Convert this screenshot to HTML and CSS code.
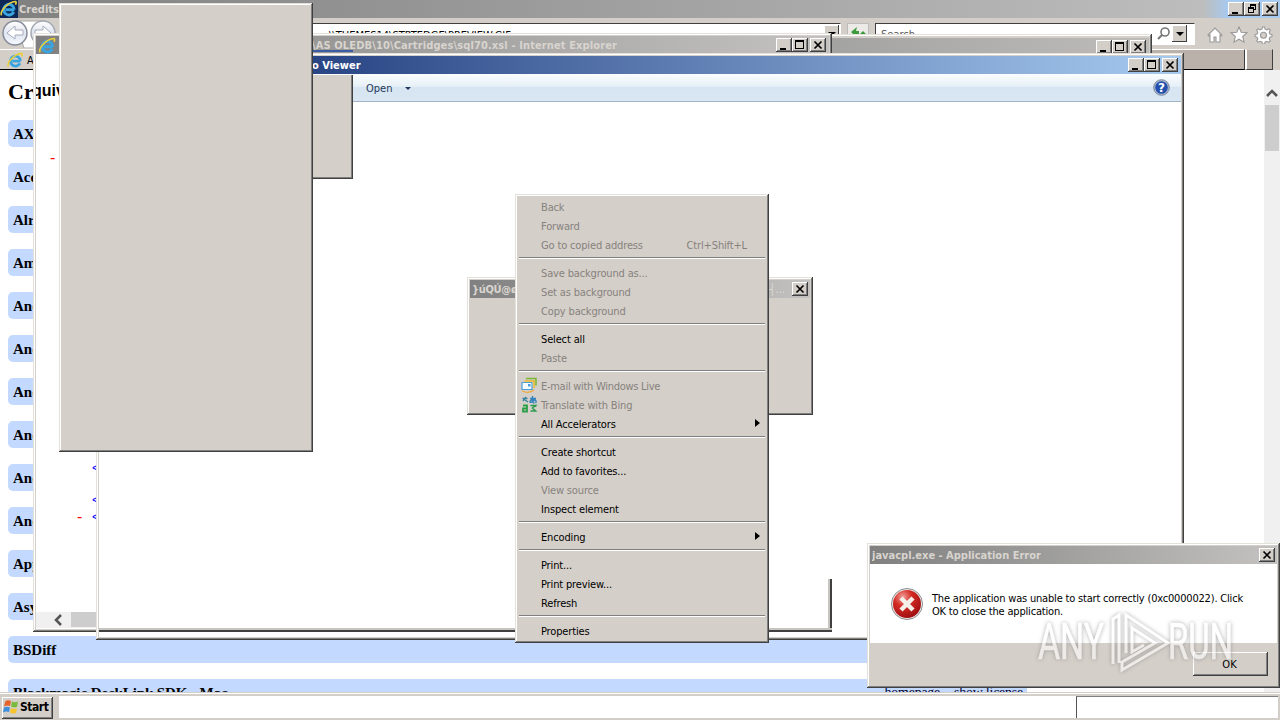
FILE: index.html
```html
<!DOCTYPE html>
<html lang="en">
<head>
<meta charset="utf-8">
<title>Desktop</title>
<link rel="stylesheet" href="styles.css">
</head>
<body>
<svg width="0" height="0" class="defs">
  <defs>
    <radialGradient id="ball" cx=".35" cy=".25" r=".8"><stop offset="0" stop-color="#f0a09a"/><stop offset=".4" stop-color="#d52b25"/><stop offset="1" stop-color="#9c0d10"/></radialGradient>
    <linearGradient id="nav" x1="0" y1="0" x2="0" y2="1"><stop offset="0" stop-color="#fff"/><stop offset=".5" stop-color="#dfe4ef"/><stop offset="1" stop-color="#f5faff"/></linearGradient>
    <symbol id="ie" viewBox="0 0 16 16"><path d="M13.6 9.2H5.2M12.9 11.3A5 5 0 1 1 13.4 8.9" fill="none" stroke="#39a5e0" stroke-width="2.8"/><path d="M1.500 14.500C-.5 11 7 2 14.600 1.400c1 .5.6 2-.1 3" fill="none" stroke="#e8ce3c" stroke-width="1.600"/></symbol>
    <symbol id="min" viewBox="0 0 16 14"><path d="M4 10h6v2H4z"/></symbol>
    <symbol id="max" viewBox="0 0 16 14"><path d="M3 2h9v9H3zM4 4v6h7V4z" fill-rule="evenodd"/></symbol>
    <symbol id="res" viewBox="0 0 16 14"><path d="M6 2h6v6h-2V7h1V4H7v1H6zM4 5h6v6H4zM5 7v3h4V7z" fill-rule="evenodd"/></symbol>
    <symbol id="cls" viewBox="0 0 16 14"><path d="M4.500 3.500l7 7M11.500 3.500l-7 7" stroke="#000" stroke-width="1.700"/></symbol>
  </defs>
</svg>
<main class="desktop">
  <section class="browser">
    <header class="titlebar main-title">
      <span class="ie-box"><svg width="17" height="17"><use href="#ie"/></svg></span>
      <span class="caption">Credits</span>
      <span class="buttons"><svg class="btn"><use href="#min"/></svg><svg class="btn"><use href="#res"/></svg><svg class="btn close"><use href="#cls"/></svg></span>
    </header>
    <div class="toolbar">
      <svg class="nav" width="60" height="30"><path d="M15 3h28q12 1 12 13v14H24z" fill="#fff" stroke="#aaa"/><circle cx="15" cy="15" r="12" fill="url(#nav)" stroke="#858b98" stroke-width="1.500"/><circle cx="43" cy="15" r="12" fill="url(#nav)" stroke="#a4a8b2" stroke-width="1.500"/><path d="M7 15l8-7v4h8v5h-8v4z" fill="#fff" stroke="#a5acbd"/><path d="M51 15l-8-7v4h-8v5h8v4z" fill="#fff" stroke="#a5acbd"/></svg>
      <div class="address"><span>\\THEMES14\STRTEDGE\PREVIEW.GIF</span><b class="drop"><i></i></b></div>
      <div class="refresh"><svg width="20" height="20"><path d="M9 3L3 8l5 5v-3h3V7H8zM11 11l4-4 4 4h-2v5h-4v-5z" fill="#3d9b3d"/></svg></div>
      <div class="search"><span>Search</span><svg width="16" height="16"><circle cx="9" cy="6" r="4" fill="#fff" stroke="#777" stroke-width="1.600"/><path d="M6.500 8.500L2 13" stroke="#777" stroke-width="2"/></svg><b class="drop"><i></i></b></div>
      <svg class="tools" width="70" height="18" fill="#fff" stroke="#999" stroke-width="1.100"><path d="M1 9l7-7 7 7-1 1-1-1v7h-4v-5H7v5H3V9l-1 1z"/><path d="M32 1l2.200 5.200 5.800.5-4.300 3.800 1.300 5.700-5-3-5 3 1.300-5.700L24 6.700l5.800-.5z"/><path d="M55.500 1h2l.6 2.200 1.800.7 2-1.100 1.400 1.400-1.100 2 .7 1.800 2.100.6v2l-2.100.6-.7 1.800 1.100 2-1.400 1.400-2-1.100-1.800.7-.6 2h-2l-.6-2-1.800-.7-2 1.100-1.400-1.400 1.100-2-.7-1.800-2.100-.6v-2l2.100-.6.7-1.800-1.100-2 1.400-1.400 2 1.100 1.800-.7z"/><circle cx="56.500" cy="9.200" r="3" fill="#d4cec8"/></svg>
    </div>
    <div class="tabs"><div class="tab"><svg width="16" height="16"><use href="#ie"/></svg><span>A</span></div><div class="newtab"></div></div>
    <div class="view">
      <div class="page">
        <h1>Credits</h1>
        <div class="product">AXE-CORE</div><div class="product">Accessibility</div><div class="product">Alrt</div><div class="product">Amd</div><div class="product">And</div><div class="product">And</div><div class="product">And</div><div class="product">And</div><div class="product">And</div><div class="product">And</div><div class="product">App</div><div class="product">Asy</div><div class="product">BSDiff</div>
        <div class="product"><span class="long">Blackmagic DeckLink SDK - Mac</span><span class="links"><u>homepage</u><u>show license</u></span></div>
      </div>
      <div class="scroll"><svg width="16" height="18"><path d="M3 12l5-5 5 5" fill="none" stroke="#555" stroke-width="2.500"/></svg><i></i></div>
    </div>
  </section>

  <section class="window back-window"><header class="titlebar gray"><span class="buttons"><svg class="btn"><use href="#min"/></svg><svg class="btn"><use href="#max"/></svg><svg class="btn close"><use href="#cls"/></svg></span></header></section>

  <section class="window xsl-window">
    <header class="titlebar gray"><svg class="ie-small" width="20" height="17"><use href="#ie"/></svg><span class="caption xsl-cap">\AS OLEDB\10\Cartridges\sql70.xsl - Internet Explorer</span><span class="buttons"><svg class="btn"><use href="#min"/></svg><svg class="btn"><use href="#max"/></svg><svg class="btn close"><use href="#cls"/></svg></span></header>
    <div class="xsl">
      <div class="heading">quiv</div>
      <div class="line l1"><em>-</em></div>
      <div class="line l2"><em></em><b>&lt;</b></div>
      <div class="line l3"><em></em><b>&lt;</b></div>
      <div class="line l4"><em>-</em><b>&lt;</b></div>
      <div class="hscroll"><svg width="35" height="16"><path d="M25 3l-5 5 5 5" fill="none" stroke="#555" stroke-width="2.500"/></svg><i></i></div>
    </div>
  </section>

  <section class="window viewer">
    <header class="titlebar blue"><span class="caption">o Viewer</span><span class="buttons"><svg class="btn"><use href="#min"/></svg><svg class="btn"><use href="#max"/></svg><svg class="btn close"><use href="#cls"/></svg></span></header>
    <div class="viewbar"><span>Open</span><i></i><svg width="17" height="17"><circle cx="8.500" cy="8.500" r="7.800" fill="#aeb9cf" stroke="#66738d" stroke-width=".8"/><circle cx="8.500" cy="8.500" r="6.300" fill="#2450ad"/><text x="8.500" y="13" text-anchor="middle" class="q">?</text></svg></div>
    <div class="canvas"><div class="remnant-side"></div><div class="remnant-bottom"></div></div>
  </section>
  <div class="blue-strip"></div>
  <div class="panel panel-a"></div>
  <div class="panel panel-b"></div>

  <section class="window dialog"><header class="titlebar gray"><span class="caption">}úQÚ@ø</span><span class="tail">┤...</span><span class="buttons"><svg class="btn close"><use href="#cls"/></svg></span></header></section>

  <nav class="menu">
    <div class="item off">Back</div><div class="item off">Forward</div><div class="item off">Go to copied address<span class="key">Ctrl+Shift+L</span></div>
    <hr>
    <div class="item off">Save background as...</div><div class="item off">Set as background</div><div class="item off">Copy background</div>
    <hr>
    <div class="item">Select all</div><div class="item off">Paste</div>
    <hr>
    <div class="item off tight"><svg class="ico" width="17" height="17"><path d="M5 1.500h10v7" fill="none" stroke="#7bb52e" stroke-width="1.500"/><path d="M3.500 4h9.500v7" fill="#fff4c4" stroke="#e8b52c" stroke-width="1.500"/><path d="M1 5.500h10v7H1z" fill="#f4fbff" stroke="#4f9cd8" stroke-width="1.200"/><path d="M7 7h2.500v2.500H7z" fill="#4a9bdb"/><path d="M1 14q7 3 12-1" fill="none" stroke="#f0a93a" stroke-width="1.300"/></svg>E-mail with Windows Live</div>
    <div class="item off"><svg class="ico" width="17" height="17" fill="none" stroke-width="1.400"><path d="M1.500 2.500h5M5 1L2 5M4 4l3 2" stroke="#38829f"/><path d="M9 2.500h6M11.500 0v5q0 2 2 2M14 3q-2 4-5 3 0-3 5-2 2 1 .5 3" stroke="#3585bd"/><path d="M2 9.500h4v6H2v-3h4" stroke="#2a9f48" stroke-width="1.800"/><path d="M9.500 9.500h5l-3 2.500 3 3h-5M14.500 9v2" stroke="#2c9c50" stroke-width="1.600"/></svg>Translate with Bing</div>
    <div class="item">All Accelerators<i class="sub"></i></div>
    <hr>
    <div class="item">Create shortcut</div><div class="item">Add to favorites...</div><div class="item off">View source</div><div class="item">Inspect element</div>
    <hr>
    <div class="item">Encoding<i class="sub"></i></div>
    <hr>
    <div class="item">Print...</div><div class="item">Print preview...</div><div class="item">Refresh</div>
    <hr>
    <div class="item">Properties</div>
  </nav>

  <section class="window error">
    <header class="titlebar gray"><span class="caption">javacpl.exe - Application Error</span><span class="buttons"><svg class="btn close"><use href="#cls"/></svg></span></header>
    <div class="message"><svg width="32" height="32"><circle cx="16" cy="16" r="15.500" fill="#eee" stroke="#8c8c8c"/><circle cx="16" cy="16" r="14" fill="url(#ball)"/><path d="M10 10l12 12M22 10L10 22" stroke="#f4efe9" stroke-width="4.500"/></svg><p>The application was unable to start correctly (0xc0000022). Click<br>OK to close the application.</p></div>
    <div class="actions"><button>OK</button></div>
  </section>
  <svg class="watermark" width="210" height="76"><g class="wm-text"><text x="6" y="54" textLength="66" lengthAdjust="spacingAndGlyphs">ANY</text><text x="136" y="54" textLength="65" lengthAdjust="spacingAndGlyphs">RUN</text></g><g class="wm-mark"><path d="M81 59V14l6-4v48M94 48V10l42 28-46 27v-8l33-19-23-15v24l12-7"/></g></svg>

  <footer class="taskbar"><div class="start"><svg width="16" height="16"><path d="M2.500 2Q5 .5 8 2L7 7Q4 6 1 7.500z" fill="#e6622a"/><path d="M9 2.500q3 1.500 6 0L14 8q-3 1-6-.5z" fill="#7cba3d"/><path d="M1 8.500q3-1.500 6 0L6 13q-3-1-6 .5z" fill="#3f8fdd"/><path d="M8 9q3 1.500 6 .5L13 14q-3 1-6-.5z" fill="#f5c52c"/></svg>Start</div><div class="tasks"></div><div class="tray"></div></footer>
</main>
</body>
</html>
```
FILE: styles.css
```css
* { box-sizing: border-box; }
body { margin: 0; font: 11px/13px "DejaVu Sans Condensed", "DejaVu Sans", sans-serif; letter-spacing: -0.2px; color: #000; }
.defs { position: absolute; }
.desktop { position: relative; width: 1280px; height: 720px; overflow: hidden; background: #fff; white-space: nowrap; }

.titlebar { display: flex; align-items: center; height: 18px; padding: 0 3px 0 2px; color: #d8d4ce; font-weight: bold; letter-spacing: 0; overflow: hidden; }
.caption { overflow: hidden; }
.gray { background: linear-gradient(90deg, #808080, #c3c2c0); }
.blue { background: linear-gradient(90deg, #0a246a, #a6caf0); color: #fff; }
.buttons { display: flex; margin-left: auto; flex: none; }
.btn { width: 16px; height: 14px; background: #d4cec8; box-shadow: inset -1px -1px #404040, inset 1px 1px #fff, inset -2px -2px #808080; }
.btn.close { margin-left: 2px; }
.window { position: absolute; background: #d5cfc9; padding: 3px; box-shadow: inset -1px -1px #404040, inset 1px 1px #e4e0da, inset -2px -2px #808080, inset 2px 2px #fff; }

.browser { display: flex; flex-direction: column; height: 693px; }
.main-title { background: linear-gradient(90deg, #808080, #bdbdbd 94%, #a6caf0 96%); padding: 0 2px 0 0; }
.ie-box { width: 18px; height: 18px; background: #0d2757; margin-right: 1px; }
.toolbar { display: flex; height: 30px; background: #d4cec8; align-items: flex-start; }
.nav { flex: none; }
.address { display: flex; justify-content: space-between; width: 781px; height: 22px; margin-top: 5px; padding: 1px 1px 0 269px; background: #fff; border-top: 1px solid #404040; border-right: 1px solid #fff; }
.address span { padding-top: 4px; letter-spacing: 0; }
.drop { width: 15px; height: 17px; background: #d4cec8; box-shadow: inset -1px -1px #404040, inset 1px 1px #fff; display: flex; align-items: center; justify-content: center; }
.drop i { border: 4px solid transparent; border-top-color: #000; border-bottom: 0; }
.refresh { margin: 5px 0 0 6px; width: 22px; height: 22px; border: 1px solid #bbb; background: #eceae7; }
.search { display: flex; width: 320px; height: 22px; margin: 5px 0 0 6px; padding: 1px 7px 1px 5px; background: #fff; border: 1px solid #fff; border-top: 1px solid #404040; border-left: 1px solid #404040; color: #555; }
.search span { flex: 1; padding-top: 3px; letter-spacing: 0; }
.search svg { margin: 1px 0 0; }
.tools { margin: 8px 0 0 12px; }
.tabs { display: flex; height: 22px; background: #d4cec8; padding-top: 1px; }
.tab { display: flex; width: 1245px; height: 21px; padding: 2px 7px; gap: 4px; background: linear-gradient(90deg, #d4cec8 100px, #b9b1aa 200px); border-top: 1px solid #fff; border-bottom: 1px solid #000; border-right: 1px solid #404040; }
.tab span { padding-top: 2px; }
.newtab { width: 28px; height: 21px; background: #b9b1aa; border: 1px solid #404040; border-top-color: #d4cec8; border-left: 2px solid #fff; }
.view { display: flex; height: 623px; overflow: hidden; background: #fff; }
.page { flex: 1; padding: 9px 8px 0; font-family: "Liberation Serif", serif; letter-spacing: 0; }
.page h1 { font-size: 22px; line-height: 26px; font-weight: bold; margin: 0 0 15px; }
.product { display: flex; justify-content: space-between; width: 1019px; height: 27px; margin-bottom: 16px; padding: 0 4px 0 5px; border-radius: 5px; background: #c3d9ff; font: bold 15px/28px "Liberation Serif", serif; }
.long { letter-spacing: -.1px; }
.links { display: flex; gap: 14px; font-size: 14px; letter-spacing: -.25px; font-weight: normal; color: #003; }
.scroll { width: 16px; padding-top: 14px; background: #f0f0f0; }
.scroll svg { display: block; }
.scroll i { display: block; height: 46px; margin: 3px 1px; background: #cdcdcd; }

.back-window { left: 700px; top: 34px; width: 452px; height: 400px; }
.back-window .titlebar { height: 17px; margin-top: 1px; background: linear-gradient(90deg, #999, #bdbcb9); }
.xsl-window { left: 33px; top: 33px; width: 799px; height: 599px; }
.ie-small { flex: none; margin-left: -1px; }
.xsl-cap { margin-left: 255px; letter-spacing: .12px; }
.xsl { height: 575px; background: #fff; padding-top: 27px; overflow: hidden; }
.heading { font: bold 16px/20px "Liberation Sans", sans-serif; letter-spacing: 0; margin-left: -4px; }
.line { display: flex; height: 16px; font: 12px/16px "Liberation Sans", sans-serif; }
.line em { width: 15px; color: #f00; font-style: normal; font-size: 16px; line-height: 15px; }
.line b { color: #00f; font-weight: normal; }
.l1 { margin: 49px 0 0 14px; }
.l2 { margin: 294px 0 0 41px; }
.l3 { margin: 16px 0 0 41px; }
.l4 { margin: 1px 0 0 41px; }
.hscroll { display: flex; height: 16px; margin-top: 87px; background: #f0f0f0; }
.hscroll i { width: 200px; height: 15px; background: #cdcdcd; }

.viewer { left: 96px; top: 53px; width: 1088px; height: 587px; }
.viewer .caption { padding-left: 211px; }
.viewbar { display: flex; align-items: center; height: 28px; padding: 1px 11px 0 267px; background: linear-gradient(#fafdff, #e7f0f7 45%, #d6e5f1 50%, #d8e7f2); border-bottom: 1px solid #a5b4c4; color: #1e395b; letter-spacing: 0; }
.viewbar i { margin-left: 13px; border: 3px solid transparent; border-top-color: #1e395b; border-bottom: 0; }
.viewbar svg { margin: -2px 0 0 auto; }
.q { font: bold 12px "DejaVu Sans", sans-serif; fill: #fff; }
.canvas { height: 535px; background: #fff; padding-top: 477px; }
.remnant-side { width: 733px; height: 49px; border-right: 2px solid #404040; box-shadow: inset -2px 0 #c8c5c0; }
.remnant-bottom { width: 733px; height: 4px; background: #c8c5c0; border-bottom: 2px solid #404040; }
.blue-strip { position: absolute; left: 313px; top: 50px; width: 40px; height: 2px; background: #3c5ca4; }
.panel { position: absolute; background: #d5cfc9; box-shadow: inset -1px -1px #404040, inset 1px 1px #e4e0da, inset -2px -2px #808080, inset 2px 2px #fff; }
.panel-a { left: 200px; top: 73px; width: 153px; height: 106px; clip-path: inset(2px 0 0 0); }
.panel-b { left: 59px; top: 3px; width: 254px; height: 449px; }

.dialog { left: 467px; top: 277px; width: 346px; height: 138px; }
.dialog .titlebar, .error .titlebar { padding-right: 2px; }
.dialog .caption { letter-spacing: -.3px; }
.tail { margin-left: auto; font-weight: normal; color: #dedbd6; }
.dialog .buttons { margin-left: 5px; }

.menu { position: absolute; left: 515px; top: 194px; width: 254px; height: 449px; padding: 4px 3px; background: #d5cfc9; box-shadow: inset -1px -1px #404040, inset 1px 1px #e4e0da, inset -2px -2px #808080, inset 2px 2px #fff; letter-spacing: -.15px; }
.item { position: relative; display: flex; height: 19px; padding: 1px 19px 0 23px; line-height: 18px; }
.tight { letter-spacing: -.28px; }
.off { color: #85827e; }
.key { margin-left: auto; }
.menu hr { height: 2px; margin: 2px 1px 5px; border: 0; border-top: 1px solid #808080; border-bottom: 1px solid #fff; }
.ico { position: absolute; left: 3px; top: 0; }
.sub { position: absolute; right: 6px; top: 4px; border: 4px solid transparent; border-left: 5px solid #000; border-right: 0; }

.error { left: 867px; top: 543px; width: 413px; height: 145px; }
.message { display: flex; height: 79px; padding: 24px 21px; gap: 9px; background: #fff; }
.message p { margin: 4px 0 0; letter-spacing: -.19px; }
.actions { display: flex; justify-content: flex-end; padding: 9px 9px; }
.actions button { width: 75px; height: 24px; padding: 0 2px 0 0; border: 0; background: #d4cec8; font: inherit; box-shadow: inset -1px -1px #404040, inset 1px 1px #fff, inset -2px -2px #808080; }
.watermark { position: absolute; left: 1032px; top: 605px; filter: drop-shadow(0 0 2px #777); opacity: .6; }
.wm-text { font: 50px "Roboto", sans-serif; fill: #fff; stroke: #fff; stroke-width: .6; }
.wm-mark { fill: none; stroke: #fff; stroke-width: 3; }

.taskbar { position: absolute; left: 0; top: 692px; width: 1280px; height: 28px; display: flex; background: #d4cec8; border-top: 1px solid #d4cec8; box-shadow: inset 0 1px #fff; padding: 3px 0 2px 2px; }
.start { display: flex; align-items: center; gap: 1px; width: 51px; height: 22px; margin: 1px 6px 0 0; padding: 0 0 2px 1px; font-weight: bold; font-size: 12px; letter-spacing: -.45px; box-shadow: inset -1px -1px #404040, inset 1px 1px #fff, inset -2px -2px #808080; }
.start svg { flex: none; }
.tasks { width: 1017px; background: #fff; }
.tray { width: 202px; background: #fff; border-left: 1px solid #555; border-top: 1px solid #808080; }
```
